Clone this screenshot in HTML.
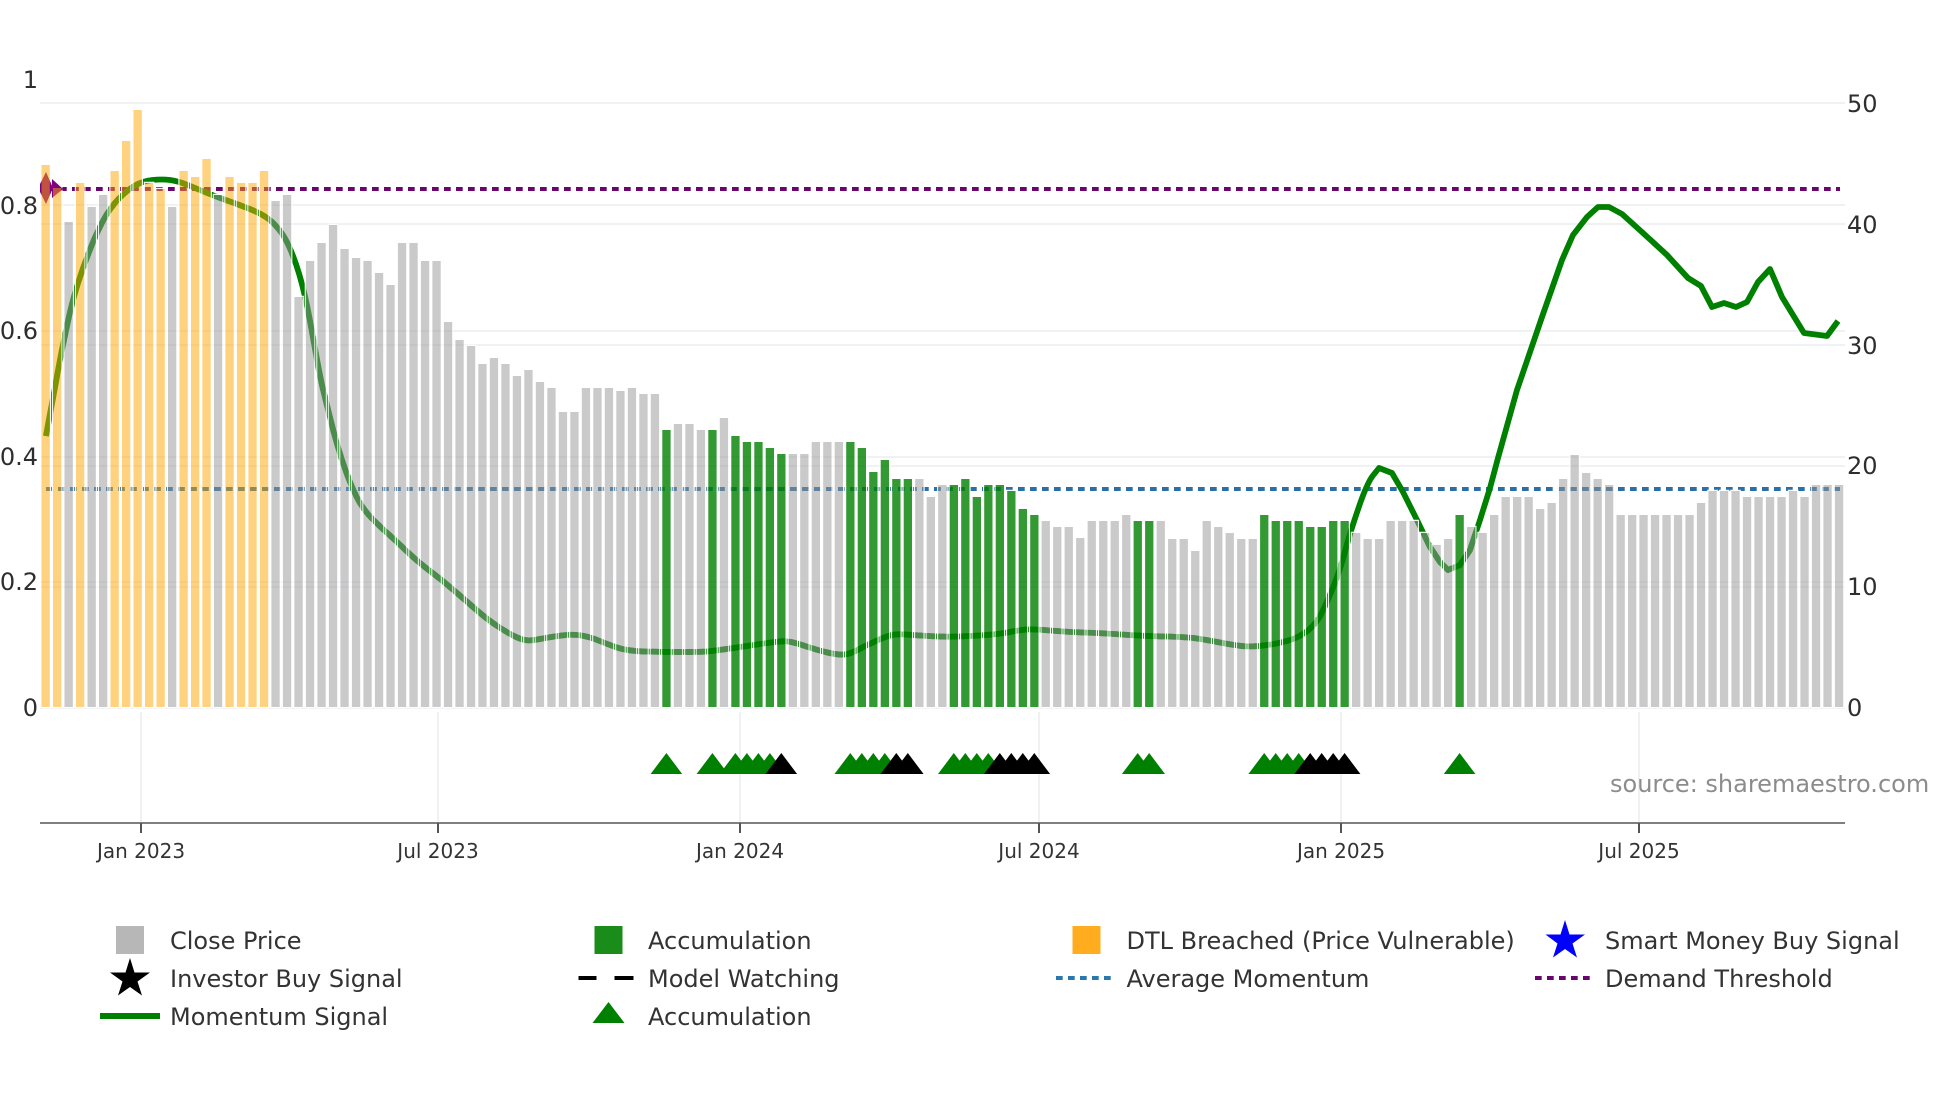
<!DOCTYPE html>
<html lang="en">
<head>
<meta charset="utf-8">
<title>Momentum chart</title>
<style>
html,body{margin:0;padding:0;background:#fff;width:1960px;height:1102px;overflow:hidden}
svg{display:block}
text{font-family:"DejaVu Sans","Liberation Sans",sans-serif}
.t{font-size:24px;fill:#2e2e2e}
.x{font-size:20px;fill:#333;text-anchor:middle}
.l{font-size:24px;fill:#333}
</style>
</head>
<body>
<svg width="1960" height="1102" viewBox="0 0 1960 1102" xmlns="http://www.w3.org/2000/svg">
<defs>
<path id="pg" d="M64.5 222h8.3V707h-8.3zM87.5 207h8.3V707h-8.3zM99 195h8.3V707h-8.3zM168 207h8.3V707h-8.3zM213.9 195h8.3V707h-8.3zM271.4 201h8.3V707h-8.3zM282.9 195h8.3V707h-8.3zM294.4 297h8.3V707h-8.3zM305.9 261h8.3V707h-8.3zM317.4 243h8.3V707h-8.3zM328.9 225h8.3V707h-8.3zM340.4 249h8.3V707h-8.3zM351.9 258h8.3V707h-8.3zM363.4 261h8.3V707h-8.3zM374.9 273h8.3V707h-8.3zM386.4 285h8.3V707h-8.3zM397.9 243h8.3V707h-8.3zM409.4 243h8.3V707h-8.3zM420.9 261h8.3V707h-8.3zM432.4 261h8.3V707h-8.3zM443.9 322h8.3V707h-8.3zM455.4 340h8.3V707h-8.3zM466.9 346h8.3V707h-8.3zM478.3 364h8.3V707h-8.3zM489.8 358h8.3V707h-8.3zM501.3 364h8.3V707h-8.3zM512.8 376h8.3V707h-8.3zM524.3 370h8.3V707h-8.3zM535.8 382h8.3V707h-8.3zM547.3 388h8.3V707h-8.3zM558.8 412h8.3V707h-8.3zM570.3 412h8.3V707h-8.3zM581.8 388h8.3V707h-8.3zM593.3 388h8.3V707h-8.3zM604.8 388h8.3V707h-8.3zM616.3 391h8.3V707h-8.3zM627.8 388h8.3V707h-8.3zM639.3 394h8.3V707h-8.3zM650.8 394h8.3V707h-8.3zM673.8 424h8.3V707h-8.3zM685.3 424h8.3V707h-8.3zM696.8 430h8.3V707h-8.3zM719.8 418h8.3V707h-8.3zM788.7 454h8.3V707h-8.3zM800.2 454h8.3V707h-8.3zM811.7 442h8.3V707h-8.3zM823.2 442h8.3V707h-8.3zM834.7 442h8.3V707h-8.3zM915.2 479h8.3V707h-8.3zM926.7 497h8.3V707h-8.3zM938.2 485h8.3V707h-8.3zM1041.6 521h8.3V707h-8.3zM1053.1 527h8.3V707h-8.3zM1064.6 527h8.3V707h-8.3zM1076.1 538h8.3V707h-8.3zM1087.6 521h8.3V707h-8.3zM1099.1 521h8.3V707h-8.3zM1110.6 521h8.3V707h-8.3zM1122.1 515h8.3V707h-8.3zM1156.6 521h8.3V707h-8.3zM1168.1 539h8.3V707h-8.3zM1179.6 539h8.3V707h-8.3zM1191.1 551h8.3V707h-8.3zM1202.6 521h8.3V707h-8.3zM1214.1 527h8.3V707h-8.3zM1225.6 533h8.3V707h-8.3zM1237.1 539h8.3V707h-8.3zM1248.6 539h8.3V707h-8.3zM1352 533h8.3V707h-8.3zM1363.5 539h8.3V707h-8.3zM1375 539h8.3V707h-8.3zM1386.5 521h8.3V707h-8.3zM1398 521h8.3V707h-8.3zM1409.5 521h8.3V707h-8.3zM1421 533h8.3V707h-8.3zM1432.5 545h8.3V707h-8.3zM1444 539h8.3V707h-8.3zM1467 527h8.3V707h-8.3zM1478.5 533h8.3V707h-8.3zM1490 515h8.3V707h-8.3zM1501.5 497h8.3V707h-8.3zM1513 497h8.3V707h-8.3zM1524.5 497h8.3V707h-8.3zM1536 509h8.3V707h-8.3zM1547.5 503h8.3V707h-8.3zM1559 479h8.3V707h-8.3zM1570.5 455h8.3V707h-8.3zM1582 473h8.3V707h-8.3zM1593.5 479h8.3V707h-8.3zM1605 485h8.3V707h-8.3zM1616.5 515h8.3V707h-8.3zM1628 515h8.3V707h-8.3zM1639.4 515h8.3V707h-8.3zM1650.9 515h8.3V707h-8.3zM1662.4 515h8.3V707h-8.3zM1673.9 515h8.3V707h-8.3zM1685.4 515h8.3V707h-8.3zM1696.9 503h8.3V707h-8.3zM1708.4 491h8.3V707h-8.3zM1719.9 491h8.3V707h-8.3zM1731.4 491h8.3V707h-8.3zM1742.9 497h8.3V707h-8.3zM1754.4 497h8.3V707h-8.3zM1765.9 497h8.3V707h-8.3zM1777.4 497h8.3V707h-8.3zM1788.9 491h8.3V707h-8.3zM1800.4 497h8.3V707h-8.3zM1811.9 485h8.3V707h-8.3zM1823.4 485h8.3V707h-8.3zM1834.9 485h8.3V707h-8.3z"/>
<path id="po" d="M41.5 165h8.3V707h-8.3zM53 188h8.3V707h-8.3zM76 183h8.3V707h-8.3zM110.5 171h8.3V707h-8.3zM122 141h8.3V707h-8.3zM133.5 110h8.3V707h-8.3zM145 183h8.3V707h-8.3zM156.5 189h8.3V707h-8.3zM179.5 171h8.3V707h-8.3zM191 177h8.3V707h-8.3zM202.4 159h8.3V707h-8.3zM225.4 177h8.3V707h-8.3zM236.9 183h8.3V707h-8.3zM248.4 183h8.3V707h-8.3zM259.9 171h8.3V707h-8.3z"/>
<path id="pn" d="M662.3 430h8.3V707h-8.3zM708.3 430h8.3V707h-8.3zM731.3 436h8.3V707h-8.3zM742.8 442h8.3V707h-8.3zM754.3 442h8.3V707h-8.3zM765.7 448h8.3V707h-8.3zM777.2 454h8.3V707h-8.3zM846.2 442h8.3V707h-8.3zM857.7 448h8.3V707h-8.3zM869.2 472h8.3V707h-8.3zM880.7 460h8.3V707h-8.3zM892.2 479h8.3V707h-8.3zM903.7 479h8.3V707h-8.3zM949.7 485h8.3V707h-8.3zM961.2 479h8.3V707h-8.3zM972.7 497h8.3V707h-8.3zM984.2 485h8.3V707h-8.3zM995.7 485h8.3V707h-8.3zM1007.2 491h8.3V707h-8.3zM1018.7 509h8.3V707h-8.3zM1030.2 515h8.3V707h-8.3zM1133.6 521h8.3V707h-8.3zM1145.1 521h8.3V707h-8.3zM1260.1 515h8.3V707h-8.3zM1271.6 521h8.3V707h-8.3zM1283.1 521h8.3V707h-8.3zM1294.6 521h8.3V707h-8.3zM1306.1 527h8.3V707h-8.3zM1317.6 527h8.3V707h-8.3zM1329.1 521h8.3V707h-8.3zM1340.5 521h8.3V707h-8.3zM1455.5 515h8.3V707h-8.3z"/>
<clipPath id="cb"><use href="#pg"/><use href="#po"/><use href="#pn"/></clipPath>
<g id="ln">
<g stroke="#eff1f5" stroke-width="2" fill="none">
<path d="M40 205H1845M40 331H1845M40 457H1845M40 582H1845M40 103H1845M40 224H1845M40 345H1845M40 466H1845M40 587H1845M40 708H1845"/>
</g>
<path d="M48 189H1840" stroke="#6a0570" stroke-width="4" stroke-dasharray="6.7 5.3" fill="none"/>
<path d="M46 489H1840" stroke="#2a6fa5" stroke-width="4" stroke-dasharray="6.7 5.3" fill="none"/>
<path fill="none" stroke="#008000" stroke-width="5.800" stroke-linejoin="round" d="M46 436Q52.700 400 57.200 375Q61.700 350 67.350 324Q73 298 79 280Q85 262 91 247Q97 232 103.500 220Q110 208 118.500 199Q127 190 135 185.500Q143 181 152.500 180Q162 179 170 180Q178 181 189 185.500Q200 190 208.500 193.500Q217 197 227 200.500Q237 204 248.500 208.500Q260 213 266.500 217.500Q273 222 279 229.500Q285 237 290 248.500Q295 260 299 273.500Q303 287 306.500 303.500Q310 320 315 348.500Q320 377 322.850 388.500Q325.700 400 329.350 415Q333 430 337.350 445Q341.700 460 346.700 473.500Q351.700 487 356.700 497Q361.700 507 368.350 514.500Q375 522 385 531Q395 540 406.500 551Q418 562 430 571Q442 580 453.500 590Q465 600 476.500 610Q488 620 498 626.500Q508 633 514 636Q520 639 525 640Q530 641 540 639Q550 637 561.500 635.500Q573 634 581.500 635.500Q590 637 598.500 640.500Q607 644 617 647.500Q627 651 645 651.500Q663 652 681.500 652Q700 652 706.500 651.500Q713 651 726.500 649Q740 647 753.500 645Q767 643 775 642Q783 641 788 641.500Q793 642 805 646Q817 650 827.500 652.500Q838 655 844 654.500Q850 654 858.500 649.500Q867 645 877 640.500Q887 636 892 635Q897 634 905 634.500Q913 635 928 636Q943 637 958 636.500Q973 636 986.500 635Q1000 634 1010 632Q1020 630 1026.500 629.500Q1033 629 1050 630.500Q1067 632 1083.500 632.500Q1100 633 1121.500 634.500Q1143 636 1165 636.500Q1187 637 1197 638.500Q1207 640 1220 642.500Q1233 645 1241.500 646Q1250 647 1263.500 645.500Q1277 644 1288.500 640.500Q1300 637 1308.500 630Q1317 623 1322.500 611.500Q1328 600 1334 585Q1340 570 1345 551.500Q1350 533 1358.500 508Q1367 483 1373 475.500L1379 468L1392 473L1403 492L1417 520L1430 547L1440 562L1448 570L1460 565L1470 550L1480 520L1490 488L1498 458L1517 390L1542 317L1562 260L1573 235L1587 217L1598 207L1609 207L1622 214L1643 233L1667 255L1688 278L1701 286L1712 307L1724 303L1736 307L1747 302L1758 282L1770 269L1782 297L1804 333L1827 336L1838 321"/>
</g>
</defs>

<rect width="1960" height="1102" fill="#fff"/>

<!-- vertical grid -->
<path d="M141 712V823M438 712V823M740 712V823M1039 712V823M1341 712V823M1639 712V823" stroke="#eff1f5" stroke-width="2" fill="none"/>

<!-- grid, reference lines and momentum -->
<use href="#ln"/>

<!-- white bar outlines -->
<g fill="none" stroke="#fff" stroke-width="2.400" stroke-opacity=".92">
<use href="#pg"/><use href="#po"/><use href="#pn"/>
</g>

<!-- content again inside bars -->
<use href="#ln" clip-path="url(#cb)"/>

<!-- left markers, above outlines and below bars -->
<path d="M46 172L53 188L46 204L40 192V184Z" fill="#800080"/>
<path d="M52 179L63 189L52 198Z" fill="#800080"/>

<!-- bars -->
<use href="#pg" fill="rgb(150,150,150)" fill-opacity=".5"/>
<use href="#po" fill="rgb(255,165,0)" fill-opacity=".5"/>
<use href="#pn" fill="rgb(0,128,0)" fill-opacity=".8"/>

<!-- signal triangles -->
<path fill="#008000" d="M666.4 753l15.800 21h-31.600zM712.4 753l15.800 21h-31.600zM735.4 753l15.800 21h-31.600zM746.9 753l15.800 21h-31.600zM758.4 753l15.800 21h-31.600zM769.9 753l15.800 21h-31.600zM850.3 753l15.800 21h-31.600zM861.8 753l15.800 21h-31.600zM873.3 753l15.800 21h-31.600zM884.8 753l15.800 21h-31.600zM953.8 753l15.800 21h-31.600zM965.3 753l15.800 21h-31.600zM976.8 753l15.800 21h-31.600zM988.3 753l15.800 21h-31.600zM1137.7 753l15.800 21h-31.600zM1149.2 753l15.800 21h-31.600zM1264.2 753l15.800 21h-31.600zM1275.7 753l15.800 21h-31.600zM1287.2 753l15.800 21h-31.600zM1298.7 753l15.800 21h-31.600zM1459.6 753l15.800 21h-31.600z"/>
<path fill="#000" d="M781.3 753l15.800 21h-31.600zM896.3 753l15.800 21h-31.600zM907.8 753l15.800 21h-31.600zM999.8 753l15.800 21h-31.600zM1011.3 753l15.800 21h-31.600zM1022.8 753l15.800 21h-31.600zM1034.3 753l15.800 21h-31.600zM1310.2 753l15.800 21h-31.600zM1321.7 753l15.800 21h-31.600zM1333.2 753l15.800 21h-31.600zM1344.6 753l15.800 21h-31.600z"/>

<!-- x axis -->
<path d="M40 823H1845" stroke="#808080" stroke-width="2" fill="none"/>
<path d="M141 823V833M438 823V833M740 823V833M1039 823V833M1341 823V833M1639 823V833" stroke="#555" stroke-width="2" fill="none"/>
<text class="x" x="141" y="858">Jan 2023</text>
<text class="x" x="438" y="858">Jul 2023</text>
<text class="x" x="740" y="858">Jan 2024</text>
<text class="x" x="1039" y="858">Jul 2024</text>
<text class="x" x="1341" y="858">Jan 2025</text>
<text class="x" x="1639" y="858">Jul 2025</text>

<!-- left ticks -->
<g text-anchor="end">
<text class="t" x="38" y="88">1</text>
<text class="t" x="38" y="214">0.8</text>
<text class="t" x="38" y="339">0.6</text>
<text class="t" x="38" y="465">0.4</text>
<text class="t" x="38" y="590">0.2</text>
<text class="t" x="38" y="716">0</text>
</g>
<!-- right ticks -->
<text class="t" x="1847" y="112">50</text>
<text class="t" x="1847" y="233">40</text>
<text class="t" x="1847" y="354">30</text>
<text class="t" x="1847" y="474">20</text>
<text class="t" x="1847" y="595">10</text>
<text class="t" x="1847" y="716">0</text>

<text x="1610" y="792" style="font-size:24px;fill:#8c8c8c">source: sharemaestro.com</text>

<!-- legend -->
<rect x="116" y="926" width="28" height="28" fill="#b7b7b7"/>
<text class="l" x="170" y="949">Close Price</text>
<rect x="594.500" y="926" width="28" height="28" fill="#1a8c1a"/>
<text class="l" x="648" y="949">Accumulation</text>
<rect x="1072.500" y="926" width="28" height="28" fill="#ffad1f"/>
<text class="l" x="1126.500" y="949">DTL Breached (Price Vulnerable)</text>
<path d="M1565 920L1569.500 934.500H1585L1572.500 943.500L1577 957.500L1565 949L1553 957.500L1557.500 943.500L1545.500 934.500H1560.500Z" fill="#0000ff"/>
<text class="l" x="1605" y="949">Smart Money Buy Signal</text>

<path d="M130 958L134.500 972.500H150L137.500 981.500L142 995.500L130 987L118 995.500L122.500 981.500L110 972.500H125.500Z" fill="#000"/>
<text class="l" x="170" y="987">Investor Buy Signal</text>
<path d="M578.500 978H596.500M614.500 978H633.500" stroke="#000" stroke-width="4" fill="none"/>
<text class="l" x="648" y="987">Model Watching</text>
<path d="M1056 978H1112" stroke="#2a77ad" stroke-width="4" stroke-dasharray="6.7 5.3" fill="none"/>
<text class="l" x="1126.500" y="987">Average Momentum</text>
<path d="M1535 978H1591" stroke="#6a0570" stroke-width="4" stroke-dasharray="6.7 5.3" fill="none"/>
<text class="l" x="1605" y="987">Demand Threshold</text>

<path d="M100 1016H160" stroke="#008000" stroke-width="6" fill="none"/>
<text class="l" x="170" y="1025">Momentum Signal</text>
<path d="M608.500 1002L624.500 1023H592.500Z" fill="#008000"/>
<text class="l" x="648" y="1025">Accumulation</text>
</svg>
</body>
</html>
